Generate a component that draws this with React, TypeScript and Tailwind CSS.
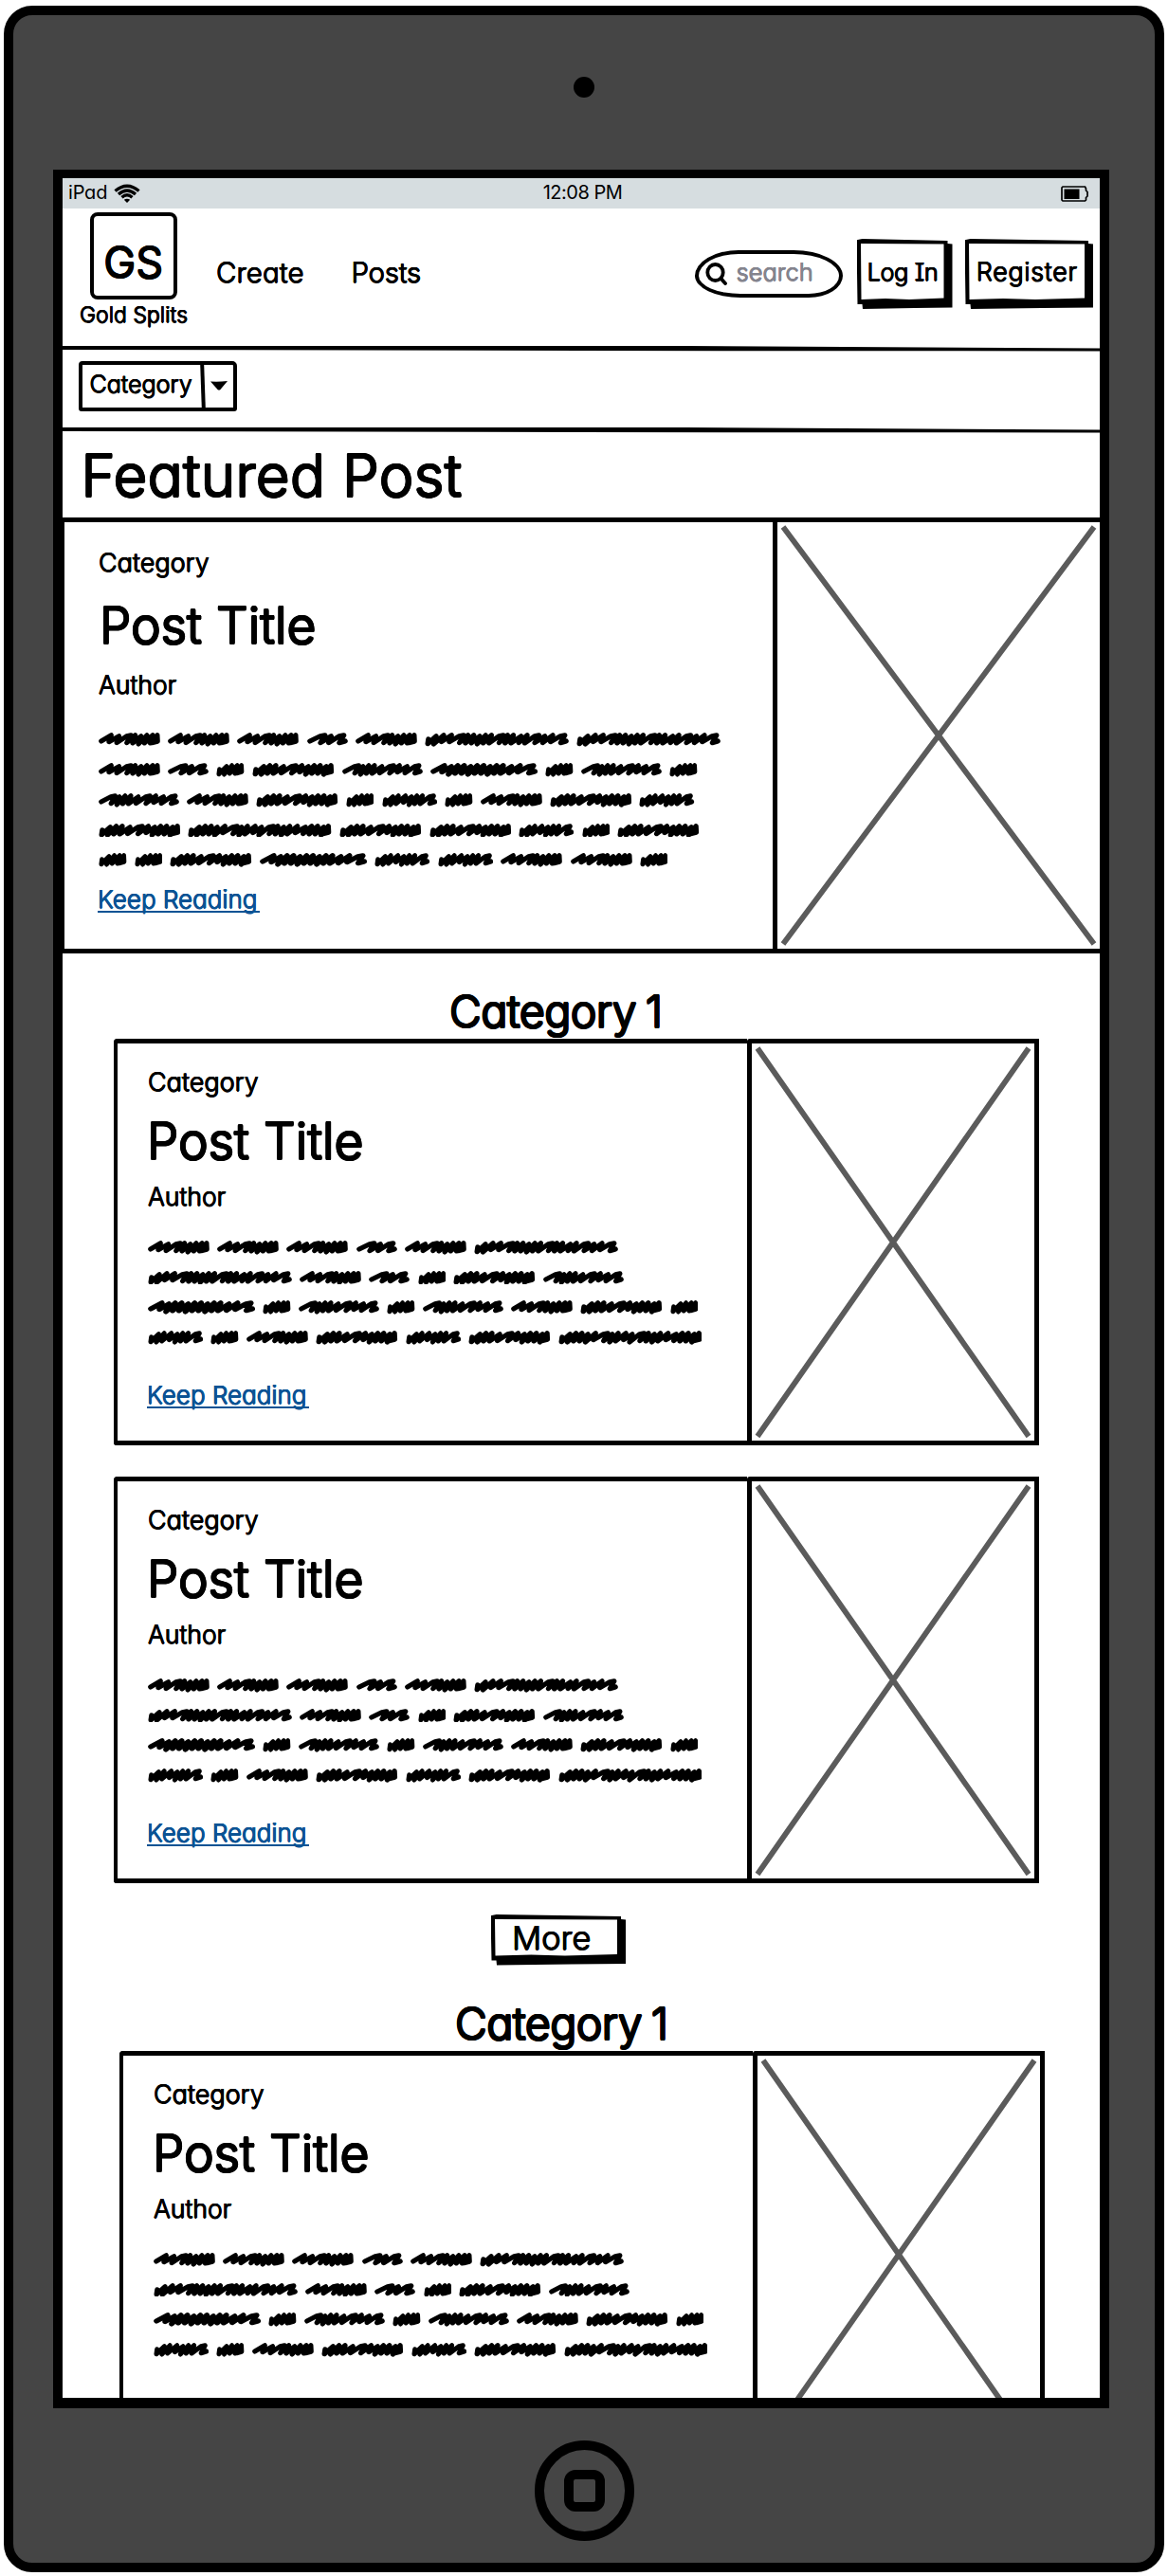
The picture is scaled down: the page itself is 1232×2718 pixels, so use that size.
import type { ReactNode } from "react";

const FEATURED_ROWS = ["AAABAFF", "ABCDEGCEC", "EADCHCADH", "DIDDHCD", "CCDGHHAAC"];
const CARD_ROWS = ["AAABAF", "FABCDE", "GCECEADC", "HCADHDI"];

// Each scribbled word: rendered width plus its pen moves
// (s = loose stroke, d = dense stroke, h = hooked stroke).
const WORDS: Record<string, { w: number; moves: string }> = {
  A: { w: 65, moves: "sshdddd" },
  B: { w: 43, moves: "hsh" },
  C: { w: 29.5, moves: "Dddd" },
  D: { w: 86.3, moves: "Ddddshsdddd" },
  E: { w: 85, moves: "hdddshssh" },
  F: { w: 152, moves: "Ddsshdddddhddsdhssh" },
  G: { w: 113.3, moves: "sdddddddddssh" },
  H: { w: 58.3, moves: "Dddsdddh" },
  I: { w: 151.5, moves: "Dddddshddsdhdddssddd" },
};

function scribblePath(moves: string) {
  let x = 8;
  let d = "M8 26";
  let i = 0;
  for (const m of moves) {
    // Alternate the depth of the strokes so the edges stay uneven.
    const dip = i % 3 === 1 ? 3 : 0;
    i += 1;
    if (m === "D") {
      d = "M11 20L9 34";
      x = 9;
    } else if (m === "s") {
      d += `L${x + 31} ${8 + dip}L${x + 24} ${28 + dip}`;
      x += 24;
    } else if (m === "h") {
      d += `L${x + 30} 11L${x + 44} 8L${x + 31} 31`;
      x += 31;
    } else {
      d += `L${x + 26} ${8 + dip}L${x + 18} ${32 + dip}`;
      x += 18;
    }
  }
  d += moves.endsWith("h") ? `L${x + 17} 26` : `L${x + 22} 8L${x + 23} 27L${x + 6} 31`;
  return { d, width: x + (moves.endsWith("h") ? 25 : 31) };
}

function Word({ type }: { type: string }) {
  const { w, moves } = WORDS[type];
  const { d, width } = scribblePath(moves);
  return (
    <svg width={w} height={14.8} viewBox={`0 0 ${width} 43`} preserveAspectRatio="none" className="shrink-0">
      <path d={d} fill="none" stroke="#000" strokeWidth={15} strokeLinecap="round" strokeLinejoin="round" />
    </svg>
  );
}

function Scribble({ rows }: { rows: string[] }) {
  return (
    <div>
      {rows.map((row, i) => (
        <div key={i} className="flex h-[31.7px] items-center gap-[8.2px]">
          {row.split("").map((t, j) => (
            <Word key={j} type={t} />
          ))}
        </div>
      ))}
    </div>
  );
}

const BIG =
  "font-light [text-shadow:1.1px_0_0_#000,-1.1px_0_0_#000,0_1.1px_0_#000,0_-1.1px_0_#000,0.8px_0.8px_0_#000,-0.8px_0.8px_0_#000,0.8px_-0.8px_0_#000,-0.8px_-0.8px_0_#000]";
const SMALL =
  "font-light [text-shadow:0.55px_0_0_currentColor,-0.55px_0_0_currentColor,0_0.5px_0_currentColor,0_-0.5px_0_currentColor]";

function Placeholder({ w, h, x2, y2 }: { w: number; h: number; x2: number; y2: number }) {
  return (
    <svg width={w} height={h} viewBox={`0 0 ${w} ${h}`} className="block shrink-0">
      <path d={`M6 5L${x2} ${y2}M${x2} 5L6 ${y2}`} stroke="#5b5b5b" strokeWidth={5.8} fill="none" />
    </svg>
  );
}

function PostCard({ link = true }: { link?: boolean }) {
  return (
    <article className="flex h-[429.5px] w-[976px]">
      <div className="w-[668px] rounded-tl-[4px] rounded-bl-[3px] border-y-[5px] border-l-[4px] border-black pt-[27px] pl-[32px]">
        <p className={`text-[27px] leading-7 ${SMALL}`}>Category</p>
        <h3 className={`mt-5 -ml-px text-[53px] leading-14 tracking-[0.1px] ${BIG}`}>Post Title</h3>
        <p className={`mt-4 text-[26.5px] leading-7 ${SMALL}`}>Author</p>
        <div className="mt-[25px]">
          <Scribble rows={CARD_ROWS} />
        </div>
        {link && <KeepReading className="mt-[31px] -ml-px" />}
      </div>
      <div className="w-[308px] rounded-tl-[3px] border-[5px] border-black">
        <Placeholder w={298} h={419} x2={292} y2={414.5} />
      </div>
    </article>
  );
}

function KeepReading({ className }: { className: string }) {
  return (
    <a className={`relative block w-[171px] text-[26px] leading-7 whitespace-nowrap text-[#0b5394] ${SMALL} ${className}`}>
      Keep Reading
      <span className="absolute top-[26px] left-0 h-[2px] w-full bg-[#0b5394]" />
    </a>
  );
}

function SketchButton({ className, children }: { className: string; children: ReactNode }) {
  return (
    <button
      className={`relative shrink-0 bg-black [clip-path:polygon(0_1.3px,6px_0,calc(100%-5px)_2px,calc(100%-5px)_5px,100%_5.5px,100%_calc(100%-1.5px),60%_calc(100%-1px),6.5px_100%,6px_calc(100%-5px),1px_calc(100%-5px))] ${className}`}
    >
      <span className="absolute inset-0 bg-white [clip-path:polygon(4.5px_5px,calc(100%-9px)_5.5px,calc(100%-9px)_calc(100%-11.5px),55%_calc(100%-10px),30%_calc(100%-11px),5px_calc(100%-10px))]" />
      <span className="relative">{children}</span>
    </button>
  );
}

function StatusBar() {
  return (
    <div className="grid h-8 grid-cols-3 items-center bg-[#d6dde0] pr-[12px] pl-[6px] text-[20px]">
      <div className="flex items-center gap-[7px]">
        <span className="mt-[-2px] leading-6 tracking-[-0.2px]">iPad</span>
        <svg width="28" height="20" viewBox="0 0 28 20">
          <g fill="none" stroke="#000" strokeWidth="3.4">
            <path d="M1.5 7.5Q14-3 26.5 7.5" />
            <path d="M5 11Q14 3 23 11" />
            <path d="M8.5 14.2Q14 9.5 19.5 14.2" />
          </g>
          <path d="M10.8 16.8Q14 14.5 17.2 16.8L14 20Z" />
        </svg>
      </div>
      <span className="mt-[-2px] ml-[9px] text-center leading-6 tracking-[-0.5px]">12:08 PM</span>
      <svg width="29" height="17" viewBox="0 0 29 17" className="justify-self-end">
        <path d="M2 1H25.5L26.5 3V5L28 6.5V11L26.5 12.5V15L25.5 16H2L1 15V2Z" fill="none" stroke="#000" strokeWidth="1.7" />
        <rect x="3.5" y="3.5" width="16" height="10.5" />
      </svg>
    </div>
  );
}

function Header() {
  return (
    <header className="flex h-[145px] items-start">
      <div className="mt-[4px] ml-[16px] flex w-[118px] flex-col items-center">
        <div className="flex h-[92px] w-[92px] justify-center rounded-[8px] border-4 border-black pt-[24px]">
          <span className={`text-[45px] leading-[50px] tracking-[0.5px] ${BIG}`}>GS</span>
        </div>
        <span className={`mt-[2px] text-[23px] leading-7 whitespace-nowrap ${SMALL}`}>Gold Splits</span>
      </div>
      <nav className={`mt-[51px] ml-[28px] flex text-[29.5px] leading-8 ${SMALL}`}>
        <a className="w-[142.5px] tracking-[0.1px]">Create</a>
        <a className="w-[109px] tracking-[-0.3px]">Posts</a>
      </nav>
      <div className="mt-[44px] ml-auto flex h-[50px] w-[156px] items-center rounded-[46px_52px_36px_48px/27px_27px_23px_23px] border-4 border-black pl-[7px]">
        <svg width="24" height="24" viewBox="0 0 24 24" fill="none" stroke="#000" strokeWidth="3.8" strokeLinecap="round" className="mb-px">
          <ellipse cx="10.5" cy="10.5" rx="8.2" ry="8.5" />
          <path d="M16.5 17L21 22" />
        </svg>
        <span className={`-mt-[4px] ml-[9px] text-[25.5px] leading-7 text-[#84848e] ${SMALL}`}>search</span>
      </div>
      <SketchButton className={`mt-[32px] ml-[15px] h-[74px] w-[101px] pr-[4px] pb-[4px] text-[25.3px] tracking-[-0.4px] [font-feature-settings:'cv11','cv08'] ${SMALL}`}>
        Log In
      </SketchButton>
      <SketchButton className={`mt-[32px] mr-[7px] ml-[13px] h-[74px] w-[135.5px] pr-1 pb-[4px] text-[27px] tracking-[0.6px] ${SMALL}`}>
        Register
      </SketchButton>
    </header>
  );
}

export default function App() {
  return (
    <main className="h-[2718px] w-[1232px] bg-white pt-[6px] pl-1 font-['Inter',sans-serif] text-black [font-feature-settings:'cv11']">
      <div className="flex h-[2708px] w-[1224px] flex-col items-center rounded-[30px] border-[10px] border-black bg-[#454545]">
        <div className="mt-[65px] h-[22px] w-[22px] rounded-full bg-black" />
        <div className="mt-[76px] mr-[6px] h-[2362px] w-[1114px] shrink-0 overflow-hidden border-x-[10px] border-t-[9px] border-b-[11px] border-black bg-white">
          <StatusBar />
          <Header />
          <div className="h-[6px] bg-black [clip-path:polygon(0_0,60%_0,100%_2.5px,100%_5.5px,50%_5px,0_4px)]" />
          <div className="h-[80px] pt-[9.5px] pl-[16.5px]">
            <div className="flex h-[53px] w-[167px] items-stretch rounded-[4px_5px_3px_3px] border-4 border-black">
              <span className={`w-[125px] pl-[8px] text-[25.2px] leading-[41px] tracking-[-0.1px] ${SMALL}`}>Category</span>
              <span className="w-[3.6px] skew-x-[2deg] bg-black" />
              <svg width="18" height="10" viewBox="0 0 18 10" className="mt-[17px] ml-[7px]">
                <path d="M0 0.5Q9 1 18 0L10 9.5H8Z" />
              </svg>
            </div>
          </div>
          <div className="h-[6px] bg-black [clip-path:polygon(0_0,60%_0,100%_2.5px,100%_5.5px,50%_5px,0_4px)]" />
          <h1 className={`h-[89px] pl-[19.5px] text-[61.5px] leading-[90px] tracking-[0.4px] ${BIG}`}>Featured Post</h1>

          <article className="-ml-[2px] flex h-[459.5px] w-[1106px]">
            <div className="w-[751px] border-y-[5px] border-l-4 border-black pt-[29px] pl-[36px]">
              <p className={`text-[27px] leading-7 ${SMALL}`}>Category</p>
              <h2 className={`mt-6 ml-[1px] text-[53px] leading-14 tracking-[0.1px] ${BIG}`}>Post Title</h2>
              <p className={`mt-5 text-[26.5px] leading-7 ${SMALL}`}>Author</p>
              <div className="mt-[29px]">
                <Scribble rows={FEATURED_ROWS} />
              </div>
              <KeepReading className="mt-[12px] -ml-px" />
            </div>
            <div className="w-[355px] border-[5px] border-black">
              <Placeholder w={345} h={449} x2={334} y2={445} />
            </div>
          </article>

          <section className="mt-[31px] pl-[54px]">
            <h2 className={`-mb-px pl-[354px] text-[46.5px] leading-[60px] tracking-[-0.5px] [word-spacing:-3px] ${BIG}`}>Category 1</h2>
            <div className="flex flex-col gap-[32.5px]">
              <PostCard />
              <PostCard />
            </div>
            <SketchButton className={`mt-[33px] ml-[397.5px] block h-[53.5px] w-[142.5px] pr-[14px] pb-[4px] text-[34.5px] leading-10 ${SMALL}`}>
              More
            </SketchButton>
          </section>

          <section className="mt-[31px] pl-[60px]">
            <h2 className={`-mb-px pl-[354px] text-[46.5px] leading-[60px] tracking-[-0.5px] [word-spacing:-3px] ${BIG}`}>Category 1</h2>
            <PostCard link={false} />
          </section>
        </div>
        <div className="mt-[34px] flex h-[106px] w-[105px] shrink-0 items-center justify-center rounded-full border-[10px] border-black">
          <div className="h-[44px] w-[43px] rounded-[12px] border-[10px] border-black" />
        </div>
      </div>
    </main>
  );
}
